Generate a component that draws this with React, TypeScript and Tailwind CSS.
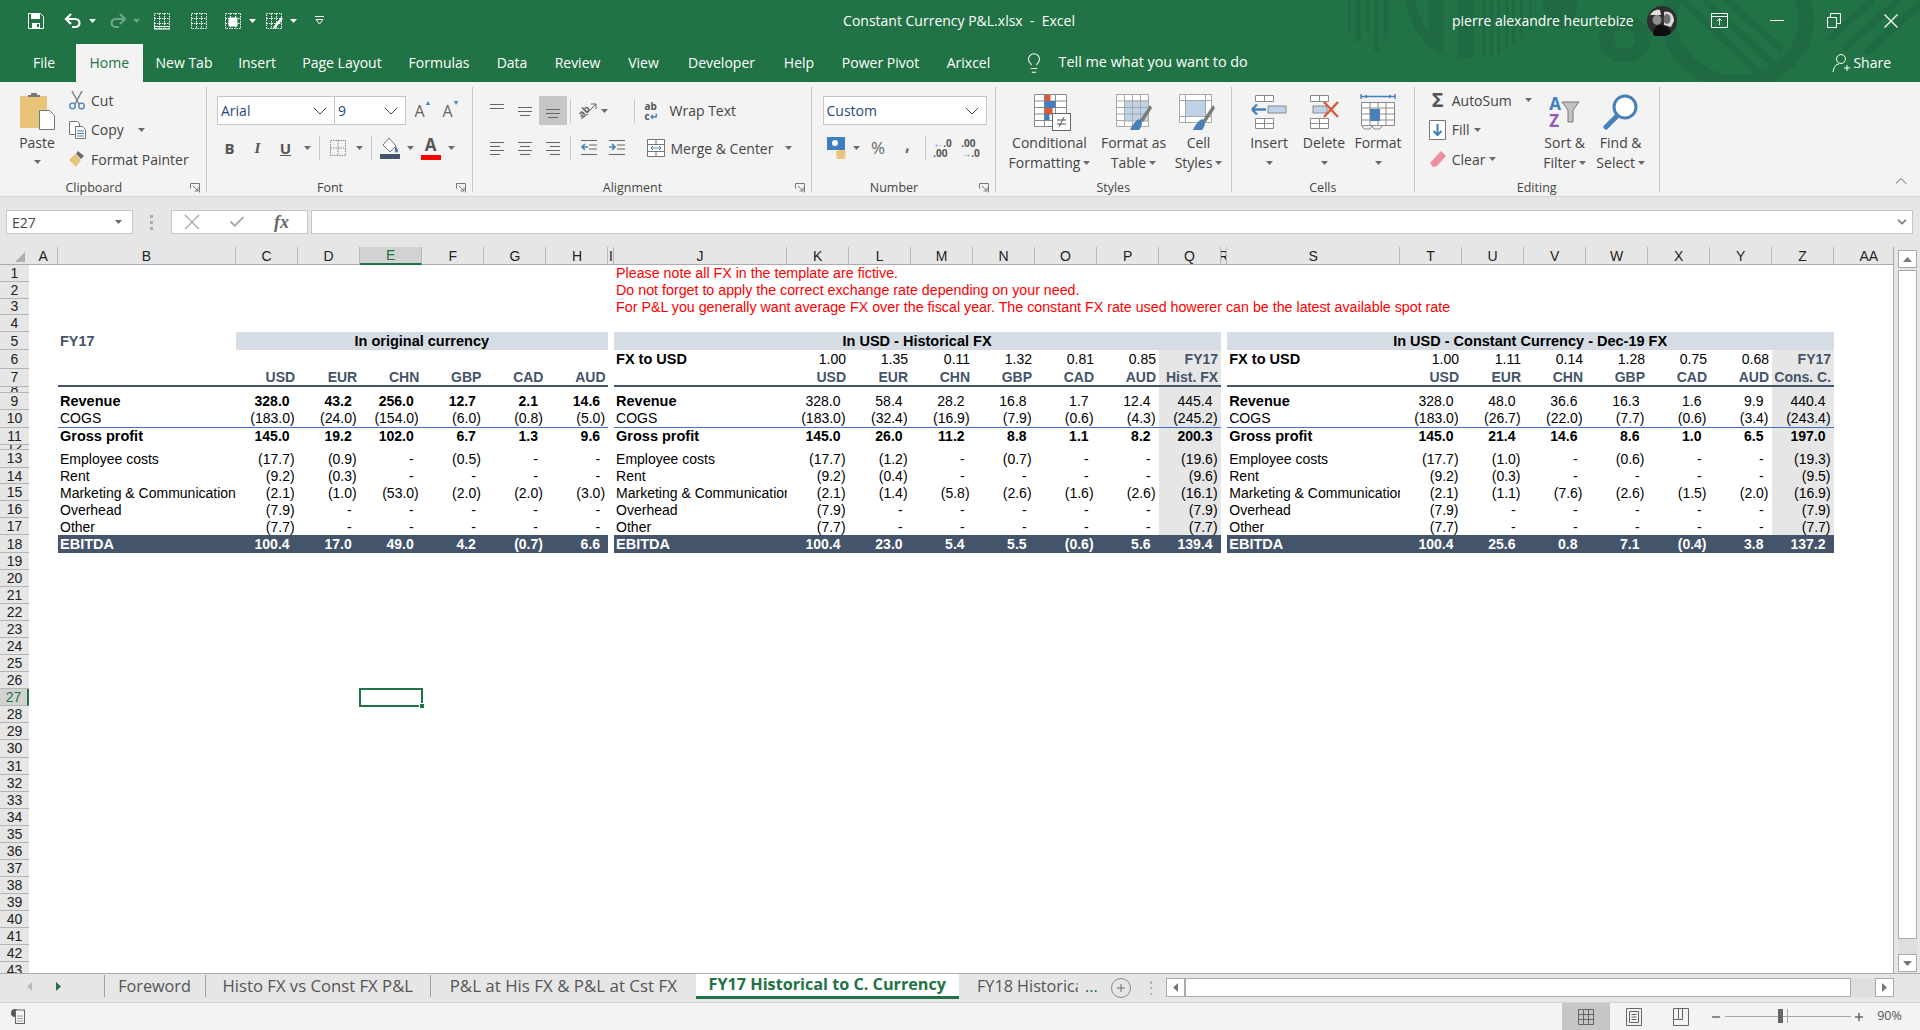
import type { ReactNode } from 'react'
import { Check, ChevronDown, ChevronUp, Lightbulb, Minus, Plus } from 'lucide-react'

const COLS =
  'grid-cols-[28.5px_178px_repeat(6,62.1px)_5.5px_173px_repeat(7,62px)_6.2px_172.8px_repeat(7,62.01px)_60.4px]'

const LETTERS = ['A','B','C','D','E','F','G','H','I','J','K','L','M','N','O','P','Q','R','S','T','U','V','W','X','Y','Z','AA']

const RIBBON_TABS = [
  { label: 'File', w: 'w-[64px]' },
  { label: 'Home', w: 'w-[66.5px]' },
  { label: 'New Tab', w: 'w-[83px]' },
  { label: 'Insert', w: 'w-[63px]' },
  { label: 'Page Layout', w: 'w-[107px]' },
  { label: 'Formulas', w: 'w-[87px]' },
  { label: 'Data', w: 'w-[59px]' },
  { label: 'Review', w: 'w-[72px]' },
  { label: 'View', w: 'w-[60px]' },
  { label: 'Developer', w: 'w-[96px]' },
  { label: 'Help', w: 'w-[59px]' },
  { label: 'Power Pivot', w: 'w-[104px]' },
  { label: 'Arixcel', w: 'w-[72px]' },
]

const D = '-'
const BODY = [
  {
    n: 9, h: 'h-[17px]', kind: 'rev', label: 'Revenue',
    v1: ['328.0', '43.2', '256.0', '12.7', '2.1', '14.6'],
    v2: ['328.0', '58.4', '28.2', '16.8', '1.7', '12.4', '445.4'],
    v3: ['328.0', '48.0', '36.6', '16.3', '1.6', '9.9', '440.4'],
  },
  {
    n: 10, h: 'h-[17.7px]', kind: 'line', label: 'COGS',
    v1: ['(183.0)', '(24.0)', '(154.0)', '(6.0)', '(0.8)', '(5.0)'],
    v2: ['(183.0)', '(32.4)', '(16.9)', '(7.9)', '(0.6)', '(4.3)', '(245.2)'],
    v3: ['(183.0)', '(26.7)', '(22.0)', '(7.7)', '(0.6)', '(3.4)', '(243.4)'],
  },
  {
    n: 11, h: 'h-[17.3px]', kind: 'bold', label: 'Gross profit',
    v1: ['145.0', '19.2', '102.0', '6.7', '1.3', '9.6'],
    v2: ['145.0', '26.0', '11.2', '8.8', '1.1', '8.2', '200.3'],
    v3: ['145.0', '21.4', '14.6', '8.6', '1.0', '6.5', '197.0'],
  },
  { n: 12, h: 'h-[5px]', kind: 'space', label: '', v1: [], v2: [], v3: [] },
  {
    n: 13, h: 'h-[17.7px]', kind: 'normal', label: 'Employee costs',
    v1: ['(17.7)', '(0.9)', D, '(0.5)', D, D],
    v2: ['(17.7)', '(1.2)', D, '(0.7)', D, D, '(19.6)'],
    v3: ['(17.7)', '(1.0)', D, '(0.6)', D, D, '(19.3)'],
  },
  {
    n: 14, h: 'h-[16.7px]', kind: 'normal', label: 'Rent',
    v1: ['(9.2)', '(0.3)', D, D, D, D],
    v2: ['(9.2)', '(0.4)', D, D, D, D, '(9.6)'],
    v3: ['(9.2)', '(0.3)', D, D, D, D, '(9.5)'],
  },
  {
    n: 15, h: 'h-[16.7px]', kind: 'normal', label: 'Marketing & Communication',
    v1: ['(2.1)', '(1.0)', '(53.0)', '(2.0)', '(2.0)', '(3.0)'],
    v2: ['(2.1)', '(1.4)', '(5.8)', '(2.6)', '(1.6)', '(2.6)', '(16.1)'],
    v3: ['(2.1)', '(1.1)', '(7.6)', '(2.6)', '(1.5)', '(2.0)', '(16.9)'],
  },
  {
    n: 16, h: 'h-[17.3px]', kind: 'normal', label: 'Overhead',
    v1: ['(7.9)', D, D, D, D, D],
    v2: ['(7.9)', D, D, D, D, D, '(7.9)'],
    v3: ['(7.9)', D, D, D, D, D, '(7.9)'],
  },
  {
    n: 17, h: 'h-[16.7px]', kind: 'normal', label: 'Other',
    v1: ['(7.7)', D, D, D, D, D],
    v2: ['(7.7)', D, D, D, D, D, '(7.7)'],
    v3: ['(7.7)', D, D, D, D, D, '(7.7)'],
  },
  {
    n: 18, h: 'h-[18.3px]', kind: 'total', label: 'EBITDA',
    v1: ['100.4', '17.0', '49.0', '4.2', '(0.7)', '6.6'],
    v2: ['100.4', '23.0', '5.4', '5.5', '(0.6)', '5.6', '139.4'],
    v3: ['100.4', '25.6', '0.8', '7.1', '(0.4)', '3.8', '137.2'],
  },
]

const EMPTY_ROWS = Array.from({ length: 24 }, (_, i) => i + 19)

// ---------- small icons ----------

function Caret({ color = '#6a6a6a' }: { color?: string }) {
  return (
    <svg width="7" height="4" viewBox="0 0 7 4" className="shrink-0">
      <path d="M0 0h7L3.5 4z" fill={color} />
    </svg>
  )
}

function Launcher() {
  return (
    <svg width="10" height="10" viewBox="0 0 10 10" className="shrink-0">
      <path d="M.5.5h9v9M.5.5v5M3 3l5 5M8 4.5V8H4.5" fill="none" stroke="#777" />
    </svg>
  )
}

function Lines({ widths, align = 'left', top = 2 }: { widths: number[]; align?: string; top?: number }) {
  return (
    <svg width="16" height="16" viewBox="0 0 16 16">
      {widths.map((w, i) => {
        const x = align === 'left' ? 1 : align === 'right' ? 15 - w : 8 - w / 2
        return <rect key={i} x={x} y={top + i * 4} width={w} height="1" fill="#666" />
      })}
    </svg>
  )
}

function GridIcon({ children }: { children?: ReactNode }) {
  return (
    <svg width="18" height="18" viewBox="0 0 18 18" fill="none" stroke="#fff">
      <path d="M1.5 1.5h15v15h-15zM1.5 6.5h15M1.5 11.5h15M6.5 1.5v15M11.5 1.5v15" strokeDasharray="1.5 1" />
      {children}
    </svg>
  )
}

function Sep() {
  return <div className="h-[24px] w-px bg-[#c6c6c6]" />
}

function Slot({ w, children }: { w: string; children?: ReactNode }) {
  return <div className={`flex h-full items-center justify-center ${w}`}>{children}</div>
}

function CellsIcon({ kind }: { kind: string }) {
  if (kind === 'format') {
    return (
      <svg width="36" height="38" viewBox="0 0 36 38">
        <path d="M1 3.5h34M1 1v5M35 1v5" stroke="#4a80b8" strokeWidth="1.4" fill="none" />
        <path d="M4 3.5l3-2v4zM32 3.5l-3-2v4z" fill="#4a80b8" />
        <path d="M1.5 9.5h33v23h-33zM1.5 15h33M1.5 21h33M1.5 27h33M10 9.5v23M18 9.5v23M26 9.5v23" fill="#fff" stroke="#8a8a8a" />
        <rect x="10" y="16" width="10" height="12" fill="#4a80b8" />
        <path d="M2 33l2 3h6l2-3M12 33l2 3h6l2-3" fill="none" stroke="#8a8a8a" />
      </svg>
    )
  }
  return (
    <svg width="36" height="36" viewBox="0 0 36 36">
      <path d="M4.5 1.5h18v6h-18zM13.5 1.5v6M4.5 24.5h18v10h-18zM4.5 29.5h18M13.5 24.5v10" fill="#fff" stroke="#8a8a8a" />
      {kind === 'insert' ? (
        <>
          <rect x="17" y="12" width="18" height="7" fill="#bfd3e8" stroke="#8a8a8a" />
          <path d="M15 15.5H1M1 15.5l5-5M1 15.5l5 5" stroke="#4a80b8" strokeWidth="2.4" fill="none" />
        </>
      ) : (
        <>
          <rect x="7" y="12" width="14" height="7" fill="#bfd3e8" stroke="#8a8a8a" />
          <path d="M18 8l14 15M32 8L18 23" stroke="#d9583a" strokeWidth="2.4" fill="none" />
        </>
      )}
    </svg>
  )
}

function StyleGrid({ fill }: { fill: 'table' | 'cell' }) {
  return (
    <svg width="38" height="38" viewBox="0 0 38 38">
      {fill === 'table' ? (
        <>
          <path d="M1.5 1.5h32v32h-32zM1.5 8h32M1.5 14.5h32M1.5 21h32M1.5 27.5h32M9.5 1.5v32M17.5 1.5v32M25.5 1.5v32" fill="#fff" stroke="#a8a8a8" />
          <rect x="9.5" y="8" width="24" height="20" fill="#bfd3e8" stroke="#a8a8a8" />
          <path d="M9.5 14.5h24M9.5 21h24M17.5 8v20M25.5 8v20" stroke="#a8a8a8" fill="none" />
        </>
      ) : (
        <>
          <path d="M1.5 1.5h32v28h-32zM1.5 7.5h32M7.5 1.5v28M27.5 1.5v28M1.5 23.5h32" fill="#fff" stroke="#a8a8a8" />
          <rect x="7.5" y="7.5" width="20" height="16" fill="#bfd3e8" stroke="#a8a8a8" />
        </>
      )}
      <path d="M35 12l2 3-9 14-3-2z" fill="#7a7a7a" />
      <path d="M24 26c-4 2-7 6-9 11h9c3-3 3-7 3-9z" fill="#4a80b8" />
    </svg>
  )
}

// ---------- title bar ----------

function Pattern() {
  return (
    <svg
      viewBox="0 0 1568 246"
      preserveAspectRatio="none"
      className="absolute right-0 top-0 h-[82px] w-[580px]"
      fill="#1f6a42"
    >
      <rect x="20" width="10" height="95" />
      <rect x="42" width="14" height="125" />
      <rect x="68" width="12" height="95" />
      <rect x="92" width="12" height="155" />
      <rect x="118" width="12" height="115" />
      <path d="M175 0h30c5 40 15 70 35 95v45C205 100 185 50 175 0z" />
      <path d="M240 0h40v165l-40-25zM320 0h40v178l-40-5z" />
      <rect x="385" width="8" height="170" />
      <rect x="405" width="8" height="168" />
      <rect x="425" width="8" height="160" />
      <rect x="447" width="8" height="150" />
      <rect x="465" width="8" height="130" />
      <rect x="487" width="8" height="115" />
      <rect x="510" width="8" height="90" />
      <path d="M550 0h90c5 40-15 85-45 85s-50-45-45-85z" />
      <circle cx="770" cy="118" r="50" fill="none" stroke="#1f6a42" strokeWidth="40" />
      <circle cx="1075" cy="60" r="185" fill="none" stroke="#1f6a42" strokeWidth="42" />
      <path d="M925 0l230 240M985 0l200 205M1045 0l150 150M1320 120L1440 0M1360 150L1510 0M1420 160l150-150" fill="none" stroke="#1f6a42" strokeWidth="20" />
    </svg>
  )
}

function TitleBar() {
  return (
    <div className="relative z-10 flex h-[44px] items-center pb-[3px] text-white">
      <div className="flex w-[700px] shrink-0 items-center pl-[28px]">
        <svg width="16" height="16" viewBox="0 0 16 16">
          <path d="M.5.5h12l3 3v12H.5z" fill="none" stroke="#fff" />
          <path d="M3 1h9v5H3zM4 10h8v5.500H4z" fill="#fff" />
          <rect x="9" y="11" width="2" height="3" fill="#217346" />
        </svg>
        <svg className="ml-[20px]" width="18" height="16" viewBox="0 0 18 16" fill="none" stroke="#fff" strokeWidth="2.2">
          <path d="M7 1L2 6l5 5M2 6h9c6 0 6 8 0 8H8" />
        </svg>
        <div className="ml-[7px]"><Caret color="#fff" /></div>
        <svg className="ml-[13px]" width="18" height="16" viewBox="0 0 18 16" fill="none" stroke="#6fa585" strokeWidth="2.2">
          <path d="M11 1l5 5-5 5M16 6H7c-6 0-6 8 0 8h3" />
        </svg>
        <div className="ml-[6px]"><Caret color="#6fa585" /></div>
        <div className="ml-[13px]">
          <GridIcon><path d="M1 14.500h16M1 17h16" /></GridIcon>
        </div>
        <div className="ml-[19px]"><GridIcon /></div>
        <div className="ml-[16px]">
          <GridIcon><rect x="5" y="6" width="8" height="8" fill="#fff" /></GridIcon>
        </div>
        <div className="ml-[7px]"><Caret color="#fff" /></div>
        <div className="ml-[9px]">
          <GridIcon><path d="M17 6l-8 10" strokeWidth="2.500" /></GridIcon>
        </div>
        <div className="ml-[7px]"><Caret color="#fff" /></div>
        <svg className="ml-[18px]" width="9" height="9" viewBox="0 0 9 9" fill="none" stroke="#fff">
          <path d="M0 .5h9M1 3.500h7L4.500 8z" />
        </svg>
      </div>
      <div className="w-[518px] shrink-0 text-center text-[14px] whitespace-pre">Constant Currency P&amp;L.xlsx  -  Excel</div>
      <div className="ml-auto flex items-center pr-[22px]">
        <div className="w-[184px] text-[14px] whitespace-nowrap">pierre alexandre heurtebize</div>
        <svg className="ml-[11px]" width="30" height="30" viewBox="0 0 30 30">
          <circle cx="15" cy="15" r="15" fill="#2e2e2e" />
          <path d="M2 12C4 5 9 3 13 4l1 5H3z" fill="#e0e0e0" />
          <ellipse cx="10" cy="14" rx="4.500" ry="5" fill="#8e8e8e" />
          <path d="M17 6c5-2 10 2 10 9l-3 6-7-2z" fill="#d8d8d8" />
          <ellipse cx="20" cy="13" rx="3.500" ry="5" fill="#6e6e6e" />
          <path d="M6 29c0-7 5-11 9-10s8 3 9 8c-5 4-12 5-18 2z" fill="#0e0e0e" />
        </svg>
        <svg className="ml-[34px]" width="17" height="15" viewBox="0 0 17 15" fill="none" stroke="#fff">
          <path d="M.5.500h16v14H.5zM.5 3.500h16M8.500 12V6M6 8l2.500-2.500L11 8" />
        </svg>
        <div className="ml-[42px] h-px w-[14px] bg-white" />
        <svg className="ml-[43px]" width="14" height="15" viewBox="0 0 14 15" fill="none" stroke="#fff">
          <path d="M.5 4.500h9v10h-9zM3.500 4V.5h10v10H10" />
        </svg>
        <svg className="ml-[43px]" width="14" height="14" viewBox="0 0 14 14" fill="none" stroke="#fff" strokeWidth="1.2">
          <path d="M.5.5l13 13M13.500.5l-13 13" />
        </svg>
      </div>
    </div>
  )
}

function TabRow() {
  return (
    <div className="relative z-10 -mt-px flex h-[39px] items-stretch pl-[12px] text-[14px] text-white">
      {RIBBON_TABS.map((t) => (
        <div
          key={t.label}
          className={`flex items-center justify-center ${t.w} ${t.label === 'Home' ? 'mt-px bg-[#f3f3f3] pb-[2px] text-[#217346]' : 'pb-[1px]'}`}
        >
          {t.label}
        </div>
      ))}
      <Lightbulb className="ml-[18px] self-center" size={22} color="#fff" strokeWidth={1.1} />
      <div className="ml-[14px] self-center whitespace-nowrap pb-[1px] text-[14.400px]">Tell me what you want to do</div>
      <div className="ml-auto flex items-center pr-[29px]">
        <svg width="18" height="20" viewBox="0 0 18 20" fill="none" stroke="#fff">
          <circle cx="9" cy="6" r="4.500" />
          <path d="M1 19c1-5 3-8 6-8M12 15h6M15 12v6" />
        </svg>
        <span className="ml-[3px]">Share</span>
      </div>
    </div>
  )
}

// ---------- ribbon ----------

function Group({ label, launcher, w, children }: { label: string; launcher?: boolean; w: string; children: ReactNode }) {
  return (
    <div className={`flex h-[105px] shrink-0 flex-col border-r border-[#c6c6c6] ${w}`}>
      <div className="h-[91px]">{children}</div>
      <div className="flex h-[14px] items-center text-[12.5px] leading-none text-[#444] translate-y-[3px]">
        <div className="flex-1 text-center">{label}</div>
        {launcher && <div className="w-[18px] pl-[2px]"><Launcher /></div>}
      </div>
    </div>
  )
}

function SmallRow({ icon, text, caret, w }: { icon: ReactNode; text: string; caret?: boolean; w?: string }) {
  return (
    <div className="flex h-[24px] items-center">
      <div className="flex w-[25px] justify-center pr-[3px]">{icon}</div>
      <span className={`whitespace-nowrap ${w ?? ''}`}>{text}</span>
      {caret && <Caret />}
    </div>
  )
}

function BigButton({ w, icon, lines, caretOnly }: { w: string; icon: ReactNode; lines: string[]; caretOnly?: boolean }) {
  return (
    <div className={`flex shrink-0 flex-col items-center pt-[6px] ${w}`}>
      <div className="flex h-[38px] items-center justify-center">{icon}</div>
      <div className="mt-[2px] text-center leading-[20px] whitespace-nowrap">{lines[0]}</div>
      {caretOnly ? (
        <div className="mt-[8px]"><Caret /></div>
      ) : (
        <div className="flex items-center gap-[3px] leading-[20px] whitespace-nowrap">
          {lines[1]}
          <Caret />
        </div>
      )}
    </div>
  )
}

function Combo({ text, w, textClass }: { text: string; w: string; textClass?: string }) {
  return (
    <div className={`flex h-[29px] items-center justify-between border border-[#c6c6c6] bg-white pl-[3px] pr-[2px] ${w}`}>
      <span className={textClass ?? 'text-[#333]'}>{text}</span>
      <ChevronDown size={24} color="#444" strokeWidth={1} />
    </div>
  )
}

function Ribbon() {
  return (
    <div className="flex h-[115px] shrink-0 border-b border-[#d4d4d4] bg-[#f3f3f3] py-[5px] text-[14px] text-[#444]">
      <Group label="Clipboard" launcher w="w-[206.500px]">
        <div className="flex pl-[12px]">
          <div className="flex w-[50px] flex-col items-center pt-[5px]">
            <svg width="36" height="38" viewBox="0 0 36 38">
              <rect x="1" y="4" width="27" height="32" rx="1" fill="#e8c37a" />
              <path d="M9 5V3h3V1h6v2h3v2z" fill="#777" />
              <path d="M20.500 18.500h10l5 5v14h-15z" fill="#fff" stroke="#777" />
            </svg>
            <div className="mt-[4px] leading-[18px]">Paste</div>
            <div className="mt-[8px]"><Caret /></div>
          </div>
          <div className="ml-[4px] flex flex-col gap-[5.500px] pt-px">
            <SmallRow
              text="Cut"
              icon={
                <svg width="16" height="20" viewBox="0 0 16 20" fill="none">
                  <path d="M3 1l7 13M13 1L6 14" stroke="#7a7a7a" strokeWidth="1.400" />
                  <circle cx="3.500" cy="16" r="2.800" stroke="#4a80b8" strokeWidth="1.300" />
                  <circle cx="12.500" cy="16" r="2.800" stroke="#4a80b8" strokeWidth="1.300" />
                </svg>
              }
            />
            <SmallRow
              text="Copy"
              w="mr-[14px]"
              caret
              icon={
                <svg width="17" height="18" viewBox="0 0 17 18" fill="#fff" stroke="#777">
                  <path d="M.5.500h8l2 2v11H.5z" />
                  <path d="M6.500 5.500h7l3 3v9h-10z" />
                  <path d="M8 10h7M8 12.500h7M8 15h7" stroke="#4a80b8" />
                </svg>
              }
            />
            <SmallRow
              text="Format Painter"
              icon={
                <svg width="18" height="18" viewBox="0 0 18 18">
                  <path d="M10 1l6 5-3 3-5-5z" fill="#6a6a6a" />
                  <path d="M7 4l6 6-5 7-7-7z" fill="#e8c37a" />
                </svg>
              }
            />
          </div>
        </div>
      </Group>

      <Group label="Font" launcher w="w-[266px]">
        <div className="pl-[10.500px] pt-[9px]">
          <div className="flex h-[29px] items-center">
            <Combo text="Arial" w="w-[118px]" textClass="text-[#1f497d]" />
            <Combo text="9" w="w-[72px] -ml-px" textClass="text-[#1f497d]" />
            <div className="ml-[3px] flex w-[28px] items-start justify-center text-[16px] text-[#666]">
              A<span className="text-[7px] leading-[8px] text-[#4a80b8]">▲</span>
            </div>
            <div className="flex w-[28px] items-start justify-center text-[16px] text-[#666]">
              A<span className="text-[7px] leading-[8px] text-[#4a80b8]">▼</span>
            </div>
          </div>
          <div className="-ml-[1.500px] mt-[11px] flex h-[24px] items-center text-[15px] text-[#555]">
            <Slot w="w-[28px]"><b>B</b></Slot>
            <Slot w="w-[28px]"><i className="font-bold font-['Liberation_Serif',serif]">I</i></Slot>
            <Slot w="w-[28px]"><b className="underline">U</b></Slot>
            <Slot w="w-[16px]"><Caret /></Slot>
            <Slot w="w-[8px]"><Sep /></Slot>
            <Slot w="w-[28px]">
              <svg width="18" height="18" viewBox="0 0 18 18" fill="none" stroke="#888" strokeDasharray="1.500 1">
                <path d="M1.500 1.500h15v15h-15zM9 1.500v15M1.500 9h15" />
              </svg>
            </Slot>
            <Slot w="w-[16px]"><Caret /></Slot>
            <Slot w="w-[8px]"><Sep /></Slot>
            <Slot w="w-[28px]">
              <svg width="20" height="22" viewBox="0 0 20 22">
                <path d="M9 1l7 8-6 6-7-7z" fill="#fff" stroke="#777" />
                <path d="M15 9c2 2 3 3 3 5s-3 2-3 0z" fill="#4a80b8" />
                <rect y="17" width="20" height="5" fill="#44546a" />
              </svg>
            </Slot>
            <Slot w="w-[13px]"><Caret /></Slot>
            <Slot w="w-[28px]">
              <div className="flex flex-col items-center">
                <b className="text-[17px] leading-[16px]">A</b>
                <div className="mt-[2px] h-[5px] w-[20px] bg-[#ff0000]" />
              </div>
            </Slot>
            <Slot w="w-[14px]"><Caret /></Slot>
          </div>
        </div>
      </Group>

      <Group label="Alignment" launcher w="w-[339px]">
        <div className="pl-[10px] pt-[9px]">
          <div className="flex h-[29px] items-center">
            <Slot w="w-[28px]"><Lines widths={[14, 14]} align="center" top={1} /></Slot>
            <Slot w="w-[28px]"><Lines widths={[14, 14, 10]} align="center" top={4} /></Slot>
            <div className="flex h-[29px] w-[28px] items-center justify-center bg-[#c6c6c6]"><Lines widths={[14, 14, 10]} align="center" top={6} /></div>
            <Slot w="w-[8px]"><Sep /></Slot>
            <Slot w="w-[26px]">
              <svg width="20" height="18" viewBox="0 0 20 18" fill="none" stroke="#666">
                <text x="0" y="13" fontSize="10" fontWeight="700" fill="#666" stroke="none" transform="rotate(-45 6 10)">ab</text>
                <path d="M18 2v5M18 2h-5M18 2L9 11M3 17l7-5" />
              </svg>
            </Slot>
            <Slot w="w-[8px]"><Caret /></Slot>
            <div className="ml-[25px] h-[24px] w-px bg-[#c6c6c6]" />
            <div className="ml-[10px] flex w-[18px] flex-col text-[10px] font-bold leading-[10px] text-[#555]">
              <span>ab</span>
              <span>c<span className="text-[#3f7ec0]">↵</span></span>
            </div>
            <span className="ml-[7px]">Wrap Text</span>
          </div>
          <div className="mt-[11px] flex h-[24px] items-center">
            <Slot w="w-[28px]"><Lines widths={[14, 10, 14, 10]} top={2} /></Slot>
            <Slot w="w-[28px]"><Lines widths={[14, 10, 14, 10]} align="center" top={2} /></Slot>
            <Slot w="w-[28px]"><Lines widths={[14, 10, 14, 10]} align="right" top={2} /></Slot>
            <Slot w="w-[8px]"><Sep /></Slot>
            <Slot w="w-[28px]">
              <svg width="18" height="16" viewBox="0 0 18 16" fill="none">
                <path d="M1 .5h16M9 5h8M9 9h8M1 14.500h16" stroke="#666" />
                <path d="M8 7H2M5 4L2 7l3 3" stroke="#4a80b8" strokeWidth="1.600" />
              </svg>
            </Slot>
            <Slot w="w-[28px]">
              <svg width="18" height="16" viewBox="0 0 18 16" fill="none">
                <path d="M1 .5h16M9 5h8M9 9h8M1 14.500h16" stroke="#666" />
                <path d="M1 7h6M4 4l3 3-3 3" stroke="#4a80b8" strokeWidth="1.600" />
              </svg>
            </Slot>
            <div className="ml-[6px] h-[24px] w-px" />
            <svg className="ml-[9px]" width="18" height="18" viewBox="0 0 18 18" fill="#fff" stroke="#777">
              <path d="M.5.500h17v17H.5zM.5 5.500h17M.5 12.500h17M9 .5v5M9 12.500v5" />
              <path d="M4 9h10M4 9l2-2M4 9l2 2M14 9l-2-2M14 9l-2 2" stroke="#4a80b8" fill="none" />
            </svg>
            <span className="ml-[6px]">Merge &amp; Center</span>
            <div className="ml-[12px]"><Caret /></div>
          </div>
        </div>
      </Group>

      <Group label="Number" launcher w="w-[184px]">
        <div className="pl-[11px] pt-[9px]">
          <Combo text="Custom" w="w-[164px]" textClass="text-[#1f497d]" />
          <div className="mt-[11px] flex h-[24px] items-center">
            <Slot w="w-[28px]">
              <svg width="20" height="22" viewBox="0 0 20 22">
                <rect x="0" y="0" width="18" height="13" fill="#3f7ec0" />
                <circle cx="8" cy="6" r="3" fill="#fff" />
                <ellipse cx="14" cy="15" rx="5" ry="2" fill="#e8c37a" />
                <ellipse cx="14" cy="18" rx="5" ry="2" fill="#e8c37a" />
                <ellipse cx="14" cy="21" rx="5" ry="1" fill="#e8c37a" />
              </svg>
            </Slot>
            <Slot w="w-[12px]"><Caret /></Slot>
            <Slot w="w-[31px]"><span className="text-[17px] text-[#666]">%</span></Slot>
            <Slot w="w-[28px]"><b className="-mt-[6px] text-[17px] text-[#666]">,</b></Slot>
            <Slot w="w-[7px]"><Sep /></Slot>
            <Slot w="w-[28px]">
              <div className="text-[10px] font-bold leading-[10px] text-[#555]">
                <div><span className="text-[#3f7ec0]">←</span>.0</div>
                <div>.00</div>
              </div>
            </Slot>
            <Slot w="w-[28px]">
              <div className="text-[10px] font-bold leading-[10px] text-[#555]">
                <div>.00</div>
                <div><span className="text-[#3f7ec0]">→</span>.0</div>
              </div>
            </Slot>
          </div>
        </div>
      </Group>

      <Group label="Styles" w="w-[236.500px]">
        <div className="flex pl-[10px]">
          <BigButton
            w="w-[88px]"
            lines={['Conditional', 'Formatting']}
            icon={
              <svg className="ml-[4px]" width="38" height="38" viewBox="0 0 38 38">
                <path d="M1.500 1.500h32v32h-32zM1.500 8h32M1.500 14.500h32M1.500 21h32M1.500 27.500h32M11.500 1.500v32M22.500 1.500v32" fill="#fff" stroke="#8a8a8a" />
                <rect x="11.500" y="2" width="6" height="6" fill="#d9583a" />
                <rect x="11.500" y="8" width="11" height="7" fill="#3f7ec0" />
                <rect x="11.500" y="15" width="8" height="6" fill="#d9583a" />
                <rect x="11.500" y="21" width="5" height="6" fill="#3f7ec0" />
                <rect x="19.500" y="20.500" width="18" height="17" fill="#fff" stroke="#666" />
                <path d="M24 27h9M24 31h9M31 24l-5 10" stroke="#555" fill="none" />
              </svg>
            }
          />
          <BigButton w="w-[80px]" lines={['Format as', 'Table']} icon={<StyleGrid fill="table" />} />
          <BigButton
            w="w-[50px]"
            lines={['Cell', 'Styles']}
            icon={<div className="-ml-[4px]"><StyleGrid fill="cell" /></div>}
          />
        </div>
      </Group>

      <Group label="Cells" w="w-[182.700px]">
        <div className="flex pl-[12px]">
          <BigButton w="w-[50px]" lines={['Insert']} caretOnly icon={<CellsIcon kind="insert" />} />
          <BigButton w="w-[60px]" lines={['Delete']} caretOnly icon={<CellsIcon kind="delete" />} />
          <BigButton w="w-[48px]" lines={['Format']} caretOnly icon={<CellsIcon kind="format" />} />
        </div>
      </Group>

      <Group label="Editing" w="w-[245px]">
        <div className="flex pl-[12px]">
          <div className="flex w-[113px] shrink-0 flex-col gap-[5.500px] pt-px">
            <SmallRow
              text="AutoSum"
              w="mr-[13px]"
              caret
              icon={<span className="text-[20px] font-bold leading-none text-[#555]">Σ</span>}
            />
            <SmallRow
              text="Fill"
              w="mr-[4px]"
              caret
              icon={
                <svg width="17" height="20" viewBox="0 0 17 20" fill="#fff" stroke="#777">
                  <path d="M.5.500h16v19H.5z" />
                  <path d="M8.500 4v11M4.500 11l4 4 4-4" stroke="#3f7ec0" strokeWidth="2" fill="none" />
                </svg>
              }
            />
            <SmallRow
              text="Clear"
              w="mr-[4px]"
              caret
              icon={
                <svg width="18" height="18" viewBox="0 0 18 18">
                  <path d="M12 1l5 5-9 10-4 1-3-4z" fill="#ee8f9f" />
                </svg>
              }
            />
          </div>
          <BigButton
            w="w-[50px]"
            lines={['Sort &', 'Filter']}
            icon={
              <div className="flex items-center">
                <div className="flex flex-col text-[17px] font-bold leading-[17px]">
                  <span className="text-[#3f7ec0]">A</span>
                  <span className="text-[#9159b5]">Z</span>
                </div>
                <svg width="19" height="22" viewBox="0 0 19 22">
                  <path d="M1 1h17l-6 8v12H7V9z" fill="#c4c4c4" stroke="#777" />
                </svg>
              </div>
            }
          />
          <BigButton
            w="w-[62px]"
            lines={['Find &', 'Select']}
            icon={
              <svg width="36" height="36" viewBox="0 0 36 36" fill="none" stroke="#4a80b8">
                <circle cx="22" cy="13" r="11" fill="#fff" strokeWidth="3" />
                <path d="M14 22L3 33" strokeWidth="5" strokeLinecap="round" />
              </svg>
            }
          />
        </div>
      </Group>

      <div className="flex flex-1 items-end justify-end pr-[9px]">
        <ChevronUp size={20} color="#555" strokeWidth={1.1} />
      </div>
    </div>
  )
}

function FormulaBar() {
  return (
    <div className="flex h-[50px] shrink-0 items-start bg-[#e6e6e6] pl-[6px] pr-[7px] pt-[13px] text-[14px] text-[#444]">
      <div className="flex h-[24px] w-[127px] items-center justify-between border border-[#c6c6c6] bg-white pl-[5px] pr-[10px]">
        E27
        <Caret />
      </div>
      <div className="ml-[16px] flex h-[24px] w-[5px] flex-col items-center justify-center gap-[3px]">
        <div className="h-[3px] w-[3px] bg-[#aaa]" />
        <div className="h-[3px] w-[3px] bg-[#aaa]" />
        <div className="h-[3px] w-[3px] bg-[#aaa]" />
      </div>
      <div className="ml-[17px] flex h-[24px] w-[137px] items-center border border-[#c6c6c6] bg-white pl-[12px]">
        <svg width="16" height="16" viewBox="0 0 16 16" fill="none" stroke="#aaa" strokeWidth="1.400">
          <path d="M1 1l14 14M15 1L1 15" />
        </svg>
        <Check className="ml-[28px]" size={18} color="#aaa" strokeWidth={2.4} />
        <i className="ml-[28px] font-['Liberation_Serif',serif] text-[18px] leading-none font-bold text-[#666]">fx</i>
      </div>
      <div className="ml-[3px] flex h-[24px] flex-1 items-center justify-end border border-[#c6c6c6] bg-white pr-[3px]">
        <ChevronDown size={14} color="#777" strokeWidth={3} />
      </div>
    </div>
  )
}

// ---------- sheet ----------

function RowHead({ n }: { n: number }) {
  const sel = n === 27
  return (
    <div
      className={`flex h-full w-[29px] shrink-0 items-center justify-center overflow-hidden border-b border-[#b4b4b4] text-[14px] ${
        sel ? 'border-r-2 border-r-[#217346] bg-[#d2d2d2] text-[#217346]' : 'bg-[#e6e6e6] text-[#222]'
      }`}
    >
      {n}
    </div>
  )
}

function ColumnHeaders() {
  return (
    <div className="flex h-[18px] shrink-0 bg-[#e6e6e6]">
      <div className="flex w-[29px] shrink-0 items-end justify-end border-b border-[#ababab] pb-[2px] pr-[4px]">
        <svg width="10" height="10" viewBox="0 0 10 10"><path d="M10 0v10H0z" fill="#b0b0b0" /></svg>
      </div>
      <div className={`grid flex-1 grid-rows-1 ${COLS}`}>
        {LETTERS.map((l) => (
          <div
            key={l}
            className={`flex items-center justify-center overflow-hidden border-r border-[#b8b8b8] text-[14px] ${
              l === 'AA' ? 'pl-[11px] ' : 'pl-[1px] '
            }${
              l === 'E'
                ? 'border-b-2 border-b-[#217346] bg-[#d2d2d2] text-[#217346]'
                : 'border-b border-b-[#ababab] text-[#222]'
            }`}
          >
            {l}
          </div>
        ))}
      </div>
    </div>
  )
}

function Band({ children, span }: { children: ReactNode; span: string }) {
  return (
    <div className={`flex items-center justify-center bg-[#d6dce4] text-[14.500px] font-bold text-black ${span}`}>
      {children}
    </div>
  )
}

function bodyCells(r: (typeof BODY)[number]) {
  const total = r.kind === 'total'
  const base = total ? 'bg-[#44546a] text-white font-bold' : ''
  const line = r.kind === 'line' ? 'border-b border-[#4472c4]' : ''
  const labelBold = r.kind !== 'normal' && r.kind !== 'line' ? 'font-bold text-[14.500px]' : ''

  const section = (vals: string[], count: number, firstBold: boolean, prefix: string) => (
    <>
      <div key={prefix + 'l'} className={`flex items-center overflow-hidden whitespace-nowrap pl-[2.500px] ${base} ${line} ${labelBold}`}>
        {r.label}
      </div>
      {Array.from({ length: count }, (_, i) => {
        const v = vals[i] ?? ''
        const gray = count === 7 && i === 6 && !total ? 'bg-[#e7e6e6]' : ''
        const bold = firstBold ? 'font-bold' : ''
        const pad = v.endsWith(')') ? 'pr-[3px]' : 'pr-[8px]'
        return (
          <div key={prefix + i} className={`flex items-center justify-end whitespace-nowrap ${pad} ${base} ${gray} ${line} ${bold}`}>
            {v}
          </div>
        )
      })}
    </>
  )

  const sideBold = r.kind === 'bold' || r.kind === 'total'
  return (
    <>
      <div />
      {section(r.v1, 6, r.kind === 'rev' || sideBold, 'a')}
      <div />
      {section(r.v2, 7, sideBold, 'b')}
      <div />
      {section(r.v3, 7, sideBold, 'c')}
      <div />
    </>
  )
}

function HeadCells({ label, v1, v2, v3, under }: { label: string; v1: string[]; v2: string[]; v3: string[]; under?: boolean }) {
  const line = under ? 'border-b-2 border-[#44546a]' : ''
  const section = (vals: string[], count: number, prefix: string, lab: string) => (
    <>
      <div className={`flex items-center whitespace-nowrap pl-[2.500px] text-[14.500px] font-bold text-black ${line}`}>{lab}</div>
      {Array.from({ length: count }, (_, i) => {
        const gray = count === 7 && i === 6 ? 'bg-[#e7e6e6]' : ''
        const strong = under || i === 6 ? 'font-bold text-[#44546a]' : ''
        return (
          <div key={prefix + i} className={`flex items-center justify-end whitespace-nowrap pr-[2.500px] ${gray} ${line} ${strong}`}>
            {vals[i] ?? ''}
          </div>
        )
      })}
    </>
  )
  return (
    <>
      <div />
      {section(v1, 6, 'a', '')}
      <div />
      {section(v2, 7, 'b', label)}
      <div />
      {section(v3, 7, 'c', label)}
      <div />
    </>
  )
}

function Row({ n, h, children }: { n: number; h: string; children?: ReactNode }) {
  return (
    <div className={`flex shrink-0 ${h}`}>
      <RowHead n={n} />
      <div className={`grid flex-1 grid-rows-1 ${COLS}`}>{children}</div>
    </div>
  )
}

function Note({ children }: { children: ReactNode }) {
  return (
    <div className="col-[10/-1] flex items-center whitespace-nowrap pl-[2.500px] text-[14.250px] text-[#ff0000]">
      {children}
    </div>
  )
}

function SpacerCells() {
  return (
    <>
      <div className="col-start-[17] row-start-1 bg-[#e7e6e6]" />
      <div className="col-start-[26] row-start-1 bg-[#e7e6e6]" />
    </>
  )
}

function Sheet() {
  const cur = ['USD', 'EUR', 'CHN', 'GBP', 'CAD', 'AUD']
  return (
    <div className="flex h-[726px] shrink-0 overflow-hidden bg-[#e6e6e6]">
      <div className="flex h-full w-[1894px] shrink-0 flex-col overflow-hidden border-r border-[#ababab] bg-white font-['Liberation_Sans',Arial,sans-serif] text-[14px] leading-[14px] text-black">
        <ColumnHeaders />
        <Row n={1} h="h-[16.750px]"><Note>Please note all FX in the template are fictive.</Note></Row>
        <Row n={2} h="h-[16.750px]"><Note>Do not forget to apply the correct exchange rate depending on your need.</Note></Row>
        <Row n={3} h="h-[16.750px]">
          <Note>For P&amp;L you generally want average FX over the fiscal year. The constant FX rate used howerer can be the latest available spot rate</Note>
        </Row>
        <Row n={4} h="h-[16.750px]" />
        <Row n={5} h="h-[18px]">
          <div />
          <div className="flex items-center pl-[2.500px] text-[14.500px] font-bold text-[#44546a]">FY17</div>
          <Band span="col-span-6">In original currency</Band>
          <div />
          <Band span="col-span-8">In USD - Historical FX</Band>
          <div />
          <Band span="col-span-8">In USD - Constant Currency - Dec-19 FX</Band>
          <div />
        </Row>
        <Row n={6} h="h-[18.700px]">
          <HeadCells
            label="FX to USD"
            v1={[]}
            v2={['1.00', '1.35', '0.11', '1.32', '0.81', '0.85', 'FY17']}
            v3={['1.00', '1.11', '0.14', '1.28', '0.75', '0.68', 'FY17']}
          />
        </Row>
        <Row n={7} h="h-[18px]">
          <HeadCells label="" under v1={cur} v2={[...cur, 'Hist. FX']} v3={[...cur, 'Cons. C.']} />
        </Row>
        <Row n={8} h="h-[6.300px]"><SpacerCells /></Row>
        {BODY.map((r) => (
          <Row key={r.n} n={r.n} h={r.h}>
            {r.kind === 'space' ? <SpacerCells /> : bodyCells(r)}
          </Row>
        ))}
        {EMPTY_ROWS.map((n) => (
          <Row key={n} n={n} h="h-[17.020px]">
            {n === 27 && (
              <div className="relative col-start-5">
                <div className="absolute -inset-x-[1px] -inset-y-[1px] border-2 border-[#217346]" />
                <div className="absolute -bottom-[3px] -right-[3px] h-[6px] w-[6px] border border-white bg-[#217346]" />
              </div>
            )}
          </Row>
        ))}
        <Row n={43} h="h-[17px]" />
      </div>
      <div className="ml-[4px] flex w-[19px] shrink-0 flex-col pb-[1px] pt-[3px]">
        <div className="flex h-[18px] items-center justify-center border border-[#ababab] bg-white">
          <svg width="9" height="5" viewBox="0 0 9 5"><path d="M0 5h9L4.500 0z" fill="#777" /></svg>
        </div>
        <div className="mt-[2px] h-[669px] border border-[#ababab] bg-white" />
        <div className="flex-1 bg-[#dedede]" />
        <div className="flex h-[18px] items-center justify-center border border-[#ababab] bg-white">
          <svg width="9" height="5" viewBox="0 0 9 5"><path d="M0 0h9L4.500 5z" fill="#777" /></svg>
        </div>
      </div>
    </div>
  )
}

// ---------- bottom ----------

function SheetTab({ w, children }: { w: string; children: ReactNode }) {
  return (
    <div className={`flex h-[22px] shrink-0 items-center justify-center border-l border-[#a0a0a0] whitespace-nowrap ${w}`}>
      {children}
    </div>
  )
}

function TabsBar() {
  return (
    <div className="flex h-[29px] shrink-0 items-start border-t border-[#ababab] bg-[#e6e6e6] text-[16.200px] text-[#555]">
      <div className="mt-[1px] flex h-[22px] w-[103.500px] shrink-0 items-center">
        <svg className="ml-[27px]" width="5" height="9" viewBox="0 0 5 9"><path d="M5 0v9L0 4.500z" fill="#bbb" /></svg>
        <svg className="ml-[24px]" width="5" height="9" viewBox="0 0 5 9"><path d="M0 0v9l5-4.500z" fill="#217346" /></svg>
      </div>
      <div className="mt-[1px] flex">
        <SheetTab w="w-[101px]">Foreword</SheetTab>
        <SheetTab w="w-[225.500px]"><span className="text-[16.700px]">Histo FX vs Const FX P&amp;L</span></SheetTab>
        <SheetTab w="w-[265.600px]"><span className="text-[16.900px]">P&amp;L at His FX &amp; P&amp;L at Cst FX</span></SheetTab>
      </div>
      <div className="flex h-[25px] w-[263.400px] shrink-0 items-center justify-center border-b-[3px] border-[#217346] bg-white pb-[1px] font-bold whitespace-nowrap text-[#217346]">
        <span className="text-[16.200px]">FY17 Historical to C. Currency</span>
      </div>
      <div className="ml-[18px] mt-[1px] flex h-[22px] w-[101px] shrink-0 items-center overflow-hidden whitespace-nowrap">
        FY18 Historical FX
      </div>
      <span className="ml-[7px] mt-[1px] h-[22px] leading-[22px] text-[#217346]">...</span>
      <div className="ml-[13px] mt-[4px] flex h-[20px] w-[20px] shrink-0 items-center justify-center rounded-full border border-[#888]">
        <Plus size={12} color="#666" strokeWidth={2} />
      </div>
      <div className="ml-[19px] mt-[7px] flex h-[14px] flex-col justify-between">
        <div className="h-[2.500px] w-[2.500px] bg-[#b4b4b4]" />
        <div className="h-[2.500px] w-[2.500px] bg-[#b4b4b4]" />
        <div className="h-[2.500px] w-[2.500px] bg-[#b4b4b4]" />
      </div>
      <div className="ml-[14px] mt-[4px] flex h-[19px] w-[728px] shrink-0">
        <div className="flex w-[19px] items-center justify-center border border-[#ababab] bg-white">
          <svg width="5" height="9" viewBox="0 0 5 9"><path d="M5 0v9L0 4.500z" fill="#777" /></svg>
        </div>
        <div className="w-[666px] border border-[#ababab] bg-white" />
        <div className="flex-1 bg-[#dedede]" />
        <div className="flex w-[19px] items-center justify-center border border-[#ababab] bg-white">
          <svg width="5" height="9" viewBox="0 0 5 9"><path d="M0 0v9l5-4.500z" fill="#777" /></svg>
        </div>
      </div>
    </div>
  )
}

function StatusBar() {
  return (
    <div className="flex h-[28px] shrink-0 items-stretch border-t border-[#d4d4d4] bg-[#f3f3f3] text-[12.500px] text-[#555]">
      <div className="ml-[11px] flex items-center">
        <svg width="14" height="15" viewBox="0 0 14 15">
          <rect x="0" y="0" width="8" height="8" rx="4" fill="#555" />
          <rect x="4.500" y="1" width="9" height="13.500" fill="#f3f3f3" stroke="#666" />
          <path d="M6.500 7h5M6.500 9.500h5M6.500 12h5" stroke="#555" strokeDasharray="1 1" />
        </svg>
      </div>
      <div className="ml-auto flex w-[48px] items-center justify-center bg-[#c6c6c6]">
        <svg width="16" height="16" viewBox="0 0 16 16" fill="none" stroke="#666">
          <path d="M.5.500h15v15H.5zM.5 5.500h15M.5 10.500h15M5.500.5v15M10.500.5v15" />
        </svg>
      </div>
      <div className="flex w-[47px] items-center justify-center">
        <svg width="16" height="18" viewBox="0 0 16 18" fill="none" stroke="#666">
          <path d="M.5.500h15v17H.5zM3.500 3.500h9v11h-9zM5.500 6.500h5M5.500 9h5M5.500 11.500h5" />
        </svg>
      </div>
      <div className="flex w-[48px] items-center justify-center">
        <svg width="16" height="18" viewBox="0 0 16 18" fill="none" stroke="#666">
          <path d="M.5.500h15v17H.5zM.5 11.500h9V.5M5.500.5v11" />
        </svg>
      </div>
      <div className="ml-[5px] flex items-center">
        <Minus size={12} color="#666" strokeWidth={3} />
        <div className="relative ml-[3px] h-px w-[126px] bg-[#a8a8a8]">
          <div className="absolute -top-[7px] left-[62px] h-[14px] w-px bg-[#a8a8a8]" />
          <div className="absolute -top-[7px] left-[53px] h-[14px] w-[5px] bg-[#666]" />
        </div>
        <Plus className="ml-[2px]" size={12} color="#666" strokeWidth={3} />
      </div>
      <div className="flex w-[55px] items-center justify-center pr-[6px]">90%</div>
    </div>
  )
}

export default function App() {
  return (
    <div className="flex h-[1030px] w-[1920px] flex-col overflow-hidden bg-[#f3f3f3] font-['Open_Sans',sans-serif]">
      <div className="relative h-[82px] shrink-0 overflow-hidden bg-[#217346]">
        <Pattern />
        <TitleBar />
        <TabRow />
      </div>
      <Ribbon />
      <FormulaBar />
      <Sheet />
      <TabsBar />
      <StatusBar />
    </div>
  )
}
